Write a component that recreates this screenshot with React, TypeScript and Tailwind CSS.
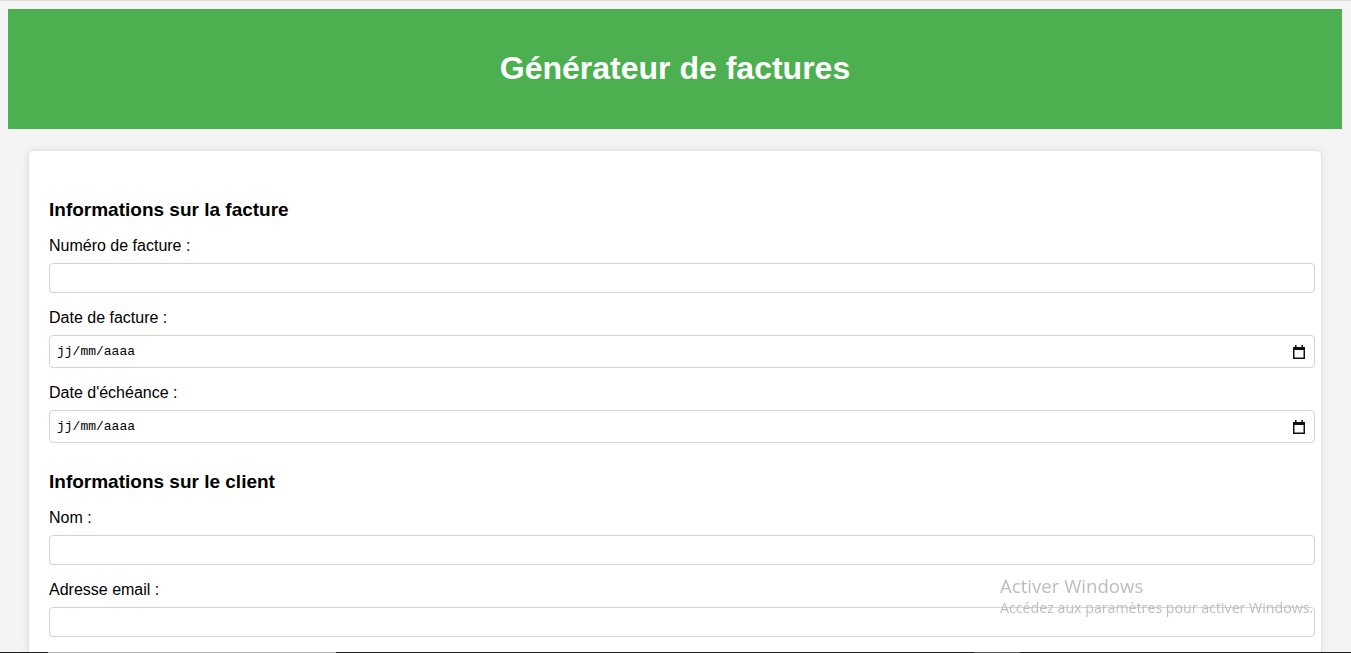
import React from "react";

const font = { fontFamily: '"Liberation Sans", Arial, sans-serif' };

const CalendarIcon = () => (
  <svg width="12" height="14" viewBox="0 0 12 14" className="shrink-0">
    <rect x="2" y="0" width="1.5" height="3" fill="#111" />
    <rect x="8.5" y="0" width="1.5" height="3" fill="#111" />
    <rect x="0" y="2" width="12" height="3" fill="#111" />
    <rect x="0.75" y="2.75" width="10.5" height="10.5" fill="none" stroke="#111" strokeWidth="1.5" />
  </svg>
);

const TextField = ({ label, type = "text", first = false }: any) => (
  <div className="flex flex-col">
    <label className={`${first ? "mt-[17px]" : "mt-[16px]"} text-[16px] leading-[18px] text-black`}>
      {label}
    </label>
    <input
      type={type}
      className="mt-[8px] h-[30px] w-[calc(100%+14px)] rounded-[4px] border border-[#d4d4d4] bg-white px-[6px] text-[13px] outline-none"
    />
  </div>
);

const DateField = ({ label }: any) => (
  <div className="flex flex-col">
    <label className="mt-[16px] text-[16px] leading-[18px] text-black">{label}</label>
    <div className="mt-[8px] flex h-[33px] w-[calc(100%+14px)] items-center rounded-[4px] border border-[#d4d4d4] bg-white pl-[7px] pr-[9px]">
      <input
        type="text"
        placeholder="jj/mm/aaaa"
        className="flex-1 bg-transparent text-[13px] text-black outline-none placeholder:text-black"
        style={{ fontFamily: '"Liberation Mono", "DejaVu Sans Mono", monospace' }}
      />
      <CalendarIcon />
    </div>
  </div>
);

const Section = ({ title, children }: any) => (
  <section>
    <h2 className="mt-[28px] text-[19px] font-bold leading-[21px] text-black">{title}</h2>
    {children}
  </section>
);

export default function App() {
  return (
    <div className="min-h-screen border-t border-[#dcdcdc] bg-[#f4f4f4] pb-10" style={font}>
      <header className="ml-[8px] mr-[9px] mt-[8px] flex h-[120px] items-center justify-center bg-[#4caf50]">
        <h1 className="-mt-[2px] text-[32px] font-bold text-white">Générateur de factures</h1>
      </header>

      <main className="ml-[28px] mr-[29px] mt-[21px] rounded-[5px] border border-[#e2e2e2] bg-white px-[20px] pb-[20px] pt-[20px] shadow-[0_0_8px_rgba(0,0,0,0.08)]">
        <form className="flex flex-col">
          <Section title="Informations sur la facture">
            <TextField label="Numéro de facture :" first />
            <DateField label="Date de facture :" />
            <DateField label="Date d'échéance :" />
          </Section>

          <Section title="Informations sur le client">
            <TextField label="Nom :" first />
            <TextField label="Adresse email :" type="email" />
          </Section>
        </form>
      </main>

      {/* Windows activation watermark */}
      <div
        className="pointer-events-none fixed left-[1000px] top-[573px] text-[#bdbdbd]"
        style={{ fontFamily: '"Open Sans", "Noto Sans", sans-serif' }}
      >
        <div className="text-[18.6px] leading-[26px]">Activer Windows</div>
        <div className="-mt-[1px] text-[14.2px] leading-[20px]">Accédez aux paramètres pour activer Windows.</div>
      </div>

      {/* bottom edge of the screen */}
      <div className="pointer-events-none fixed bottom-0 left-0 right-0 flex h-px">
        <div className="w-[48px] bg-[#1e1e1e]" />
        <div className="w-[288px] bg-[#b4b4b4]" />
        <div className="w-[638px] bg-[#1e1e1e]" />
        <div className="w-[46px] bg-[#555]" />
        <div className="flex-1 bg-[#1e1e1e]" />
      </div>
    </div>
  );
}
